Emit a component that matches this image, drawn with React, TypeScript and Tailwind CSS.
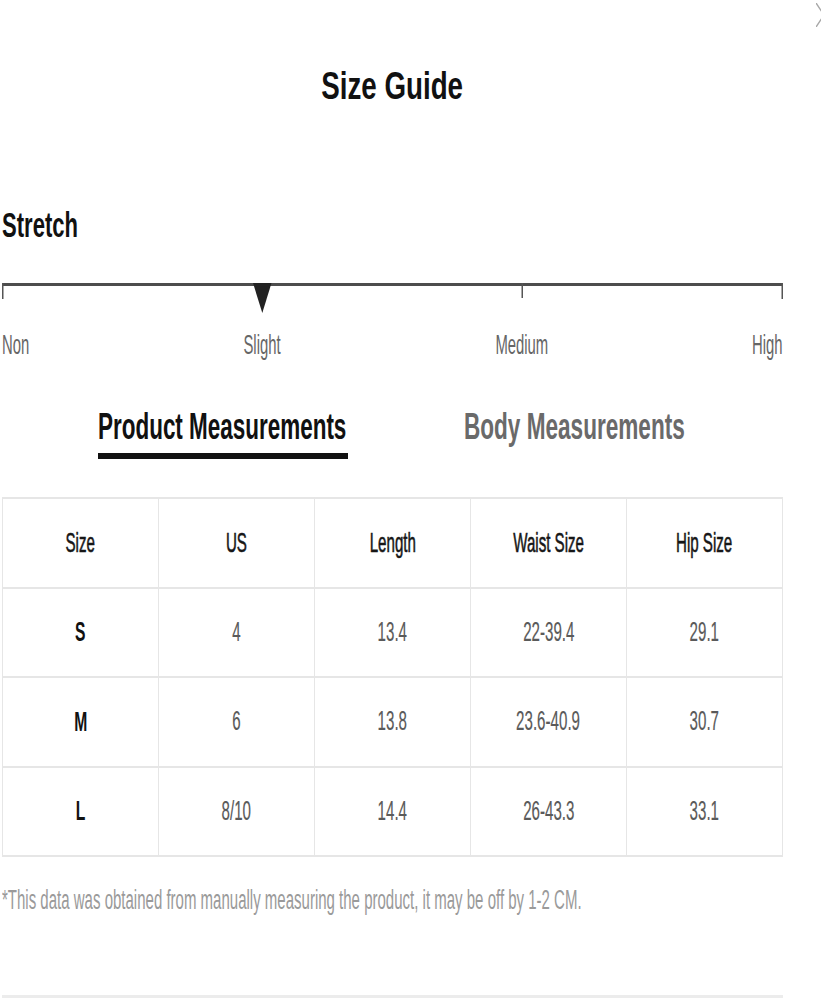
import React from "react";

const headers = ["Size", "US", "Length", "Waist Size", "Hip Size"];
const rows = [
  ["S", "4", "13.4", "22-39.4", "29.1"],
  ["M", "6", "13.8", "23.6-40.9", "30.7"],
  ["L", "8/10", "14.4", "26-43.3", "33.1"],
];

function HeadCell({ text }: { text: string }) {
  return (
    <div className="flex h-[87.5px] items-center justify-center bg-white text-[28px] leading-[28px] text-[#161616] [-webkit-text-stroke:0.6px_#161616]">
      <span className="inline-block whitespace-nowrap scale-x-[0.54]">{text}</span>
    </div>
  );
}

function ValueCell({ text, strong }: { text: string; strong: boolean }) {
  return (
    <div
      className={
        strong
          ? "flex h-[87.5px] items-center justify-center bg-white text-[28px] font-bold leading-[28px] text-[#111]"
          : "flex h-[87.5px] items-center justify-center bg-white text-[27px] leading-[27px] text-[#5a5a5a] [-webkit-text-stroke:0.2px_#5a5a5a]"
      }
    >
      <span className="inline-block whitespace-nowrap scale-x-[0.56]">{text}</span>
    </div>
  );
}

export default function App() {
  return (
    <div className="relative h-[1000px] w-[821px] overflow-hidden bg-white font-['Liberation_Sans',Arial,sans-serif]">
      <svg className="absolute left-[816px] top-[3px]" width="16" height="24" viewBox="0 0 16 24">
        <path d="M0 0 L16 24 M0 24 L16 0" stroke="#a8a8a8" strokeWidth="1.5" fill="none" />
      </svg>

      <div className="ml-[2px] w-[781px] pt-[67px]">
        <h1 className="h-[38px] text-center text-[38px] font-bold leading-[38px] text-[#111]">
          <span className="inline-block whitespace-nowrap scale-x-[0.73]">Size Guide</span>
        </h1>

        <div className="mt-[102px] h-[35px] text-[35px] font-bold leading-[35px] text-[#111]">
          <span className="inline-block origin-left whitespace-nowrap scale-x-[0.63]">Stretch</span>
        </div>

        <svg className="mt-[41px] block" width="781" height="31" viewBox="0 0 781 31">
          <rect x="0" y="0" width="781" height="3" fill="#4d4d4d" />
          <rect x="0" y="0" width="1.5" height="16" fill="#555" />
          <rect x="519.5" y="0" width="1.5" height="15" fill="#555" />
          <rect x="779.5" y="0" width="1.5" height="16" fill="#555" />
          <polygon points="251,0 269.5,0 260.3,30" fill="#222" />
        </svg>

        <div className="mt-[17px] flex h-[28px] text-[28px] leading-[28px] text-[#666]">
          <div className="w-[130px] text-left">
            <span className="inline-block origin-left whitespace-nowrap scale-x-[0.53]">Non</span>
          </div>
          <div className="w-[260px] text-center">
            <span className="inline-block whitespace-nowrap scale-x-[0.53]">Slight</span>
          </div>
          <div className="w-[260px] text-center">
            <span className="inline-block whitespace-nowrap scale-x-[0.53]">Medium</span>
          </div>
          <div className="w-[131px] text-right">
            <span className="inline-block origin-right whitespace-nowrap scale-x-[0.53]">High</span>
          </div>
        </div>

        <div className="mt-[49px] flex items-start">
          <div className="ml-[96px] w-[250px]">
            <div className="h-[37px] text-[37px] font-bold leading-[37px] text-[#111]">
              <span className="inline-block origin-left whitespace-nowrap scale-x-[0.607]">Product Measurements</span>
            </div>
            <div className="mt-[8px] h-[6px] w-[250px] bg-[#111]" />
          </div>
          <div className="ml-[116px] w-[222px]">
            <div className="h-[37px] text-[37px] font-bold leading-[37px] text-[#6a6a6a]">
              <span className="inline-block origin-left whitespace-nowrap scale-x-[0.61]">Body Measurements</span>
            </div>
          </div>
        </div>

        <div className="mt-[38px] grid grid-cols-5 gap-x-px gap-y-[2px] border-x border-y-2 border-[#e6e6e6] bg-[#e6e6e6]">
          {headers.map((h) => (
            <HeadCell key={h} text={h} />
          ))}
          {rows.map((r) =>
            r.map((v, i) => <ValueCell key={r[0] + i} text={v} strong={i === 0} />)
          )}
        </div>

        <div className="mt-[30px] h-[27px] text-[27px] leading-[27px] text-[#9a9a9a]">
          <span className="inline-block origin-left whitespace-nowrap scale-x-[0.556]">
            *This data was obtained from manually measuring the product, it may be off by 1-2 CM.
          </span>
        </div>

        <div className="mt-[81px] h-[3px] w-[781px] bg-[#ececec]" />
      </div>
    </div>
  );
}
